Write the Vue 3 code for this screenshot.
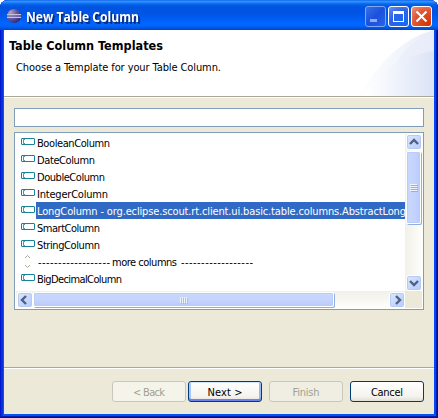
<script setup>
const rows = [
  { label: 'BooleanColumn', width: 73 },
  { label: 'DateColumn', width: 58 },
  { label: 'DoubleColumn', width: 68 },
  { label: 'IntegerColumn', width: 71 },
  { label: 'LongColumn - org.eclipse.scout.rt.client.ui.basic.table.columns.AbstractLong', width: 369, selected: true },
  { label: 'SmartColumn', width: 63 },
  { label: 'StringColumn', width: 63 },
  { label: '------------------ more columns ------------------', separator: true },
  { label: 'BigDecimalColumn', width: 85 },
]
const buttons = [
  { label: '< Back', width: 32, kind: 'disabled' },
  { label: 'Next >', width: 35, kind: 'primary' },
  { label: 'Finish', width: 27, kind: 'disabled finish' },
  { label: 'Cancel', width: 32, kind: 'cancel' },
]
</script>

<template>
  <main class="window">
    <header class="titlebar">
      <svg class="logo" width="16" height="16" viewBox="0 0 16 16">
        <defs>
          <radialGradient id="orb" cx="25%" cy="25%" r="85%">
            <stop offset="0" stop-color="#b9a0bd" />
            <stop offset=".5" stop-color="#665ba0" />
            <stop offset="1" stop-color="#292878" />
          </radialGradient>
        </defs>
        <circle cx="8" cy="8" r="7" fill="url(#orb)" />
        <path d="M1 6.5h14M1 9.5h14" stroke="#c3c2e2" />
        <path d="M1 8h14" stroke="#8d85bc" />
      </svg>
      <div class="caption"><svg width="130" height="28"><text x="0" y="20" textLength="113" lengthAdjust="spacingAndGlyphs">New Table Column</text></svg></div>
      <div class="controls">
        <span class="control min"><svg width="19" height="19"><path d="M4 12h7v3H4z" fill="#91aaf0" /></svg></span>
        <span class="control max"><svg width="19" height="19"><path d="M4 4h11v11H4zM5 7v7h9V7z" fill="#fff" fill-rule="evenodd" /></svg></span>
        <span class="control close"><svg width="19" height="19"><path d="M4.5 4.5l10 10M14.5 4.5l-10 10" stroke="#fff" stroke-width="2.1" /></svg></span>
      </div>
    </header>
    <section class="banner">
      <svg class="swoosh" width="146" height="66">
        <defs>
          <linearGradient id="fade" gradientUnits="userSpaceOnUse" x1="70" x2="146"><stop offset="0" stop-color="#fff" /><stop offset="1" stop-color="#e6ecf9" /></linearGradient>
          <linearGradient id="fade2" gradientUnits="userSpaceOnUse" x1="78" x2="146"><stop offset="0" stop-color="#fff" /><stop offset="1" stop-color="#dbe3f6" /></linearGradient>
        </defs>
        <path d="M72 66Q101 12 146 0V66z" fill="url(#fade)" />
        <path d="M74 66Q101 27 146 21V66z" fill="url(#fade2)" />
        <path d="M108 34Q123 9 146 1V21Q125 23 108 34z" fill="#e8edf9" opacity=".65" />
      </svg>
      <svg class="heading" width="180" height="20"><text x="0" y="13" textLength="154" lengthAdjust="spacingAndGlyphs">Table Column Templates</text></svg>
      <svg class="subtitle" width="240" height="18"><text x="0" y="12" textLength="205">Choose a Template for your Table Column.</text></svg>
    </section>
    <section class="content">
      <div class="filter"></div>
      <div class="list">
        <div class="rows">
          <div v-for="r in rows" :key="r.label" class="row" :class="{ selected: r.selected }">
            <svg class="icon" width="15" height="17">
              <g v-if="r.separator" fill="none" stroke="#aaa69a"><path d="M4 5l2.5-2.5L9 5M4 12l2.5 2.5L9 12" /></g>
              <g v-else fill="#fff" stroke="#168398"><rect x=".5" y="4.5" width="13" height="6" rx=".5" /><path d="M4 5.5H2.5v4H4" fill="none" stroke-width=".8" /></g>
            </svg>
            <svg class="label" width="369" height="17">
              <template v-if="r.separator"><text x="2" y="13" textLength="72">------------------</text><text x="76" y="13" textLength="65">more columns</text><text x="145" y="13" textLength="72">------------------</text></template>
              <text v-else x="1" y="13" :textLength="r.width">{{ r.label }}</text>
            </svg>
          </div>
        </div>
        <div class="vbar">
          <span class="knob"><svg width="14" height="14"><path d="M3 9l4-4 4 4" /></svg></span>
          <span class="thumb vthumb"><i v-for="n in 4" :key="n"></i></span>
          <span class="knob down"><svg width="14" height="14"><path d="M3 5l4 4 4-4" /></svg></span>
        </div>
        <div class="hbar">
          <span class="knob"><svg width="14" height="14"><path d="M8 3L4 7l4 4" /></svg></span>
          <span class="thumb hthumb"><i v-for="n in 4" :key="n"></i></span>
          <span class="knob right"><svg width="14" height="14"><path d="M6 3l4 4-4 4" /></svg></span>
        </div>
        <div class="corner"></div>
      </div>
    </section>
    <footer class="actions">
      <button v-for="b in buttons" :key="b.label" class="button" :class="b.kind">
        <svg width="72" height="19"><text :x="(72 - b.width) / 2" y="14" :textLength="b.width">{{ b.label }}</text></svg>
      </button>
    </footer>
  </main>
</template>

<style>
body { background: #fff; }
</style>
<style scoped>
* { box-sizing: border-box; }
svg { display: block; flex: none; }
.window {
  width: 438px; height: 418px; overflow: hidden; display: flex; flex-direction: column;
  padding: 0 4px 4px; border-radius: 8px 8px 0 0; background: #0831d9;
  box-shadow: inset 1px 0 #0019cf, inset -1px -1px #001199, inset -2px -2px #001db0, inset 3px 0 #0831d9, inset 4px -4px #0855ed, inset -4px 0 #0048f1;
  font-family: "DejaVu Sans Condensed", "DejaVu Sans", sans-serif; font-size: 11px;
}
.titlebar {
  height: 30px; flex: none; display: flex; align-items: flex-start; margin: 0 -4px; padding: 0 6px 0 6px;
  background: linear-gradient(#0058e5 0, #3a93ff 1px, #288eff 2px, #0765e9 4px, #0054e0 7px, #0055e5 14px, #005df5 19px, #0066ff 23px, #0064fc 26px, #0045cb 30px);
}
.logo { margin-top: 8px; }
.caption { margin: 2px 0 0 4px; font: 700 14px "Open Sans", "Noto Sans", sans-serif; }
.caption text { fill: #fff; text-shadow: 1px 1px #06328e; }
.caption svg { filter: drop-shadow(1px 1px 0 #06328e); }
.controls { display: flex; gap: 2px; margin: 6px 0 0 auto; }
.control { width: 21px; height: 21px; border: 1px solid #fff; border-radius: 3px; background: radial-gradient(circle at 80% 90%, #126bf4, #2f62e7 60%, #6d94f3); }
.control.min { border-color: #83a6f3; background: linear-gradient(135deg, #3b70e6, #1b50dd 50%, #2864e5); }
.control.close { background: radial-gradient(circle at 85% 90%, #d83300, #df512d 55%, #ed947d); }
.banner { height: 68px; flex: none; position: relative; background: #fff; border-bottom: 1px solid #fff; box-shadow: inset 0 -1px #aca899; padding: 7px 0 0 5px; }
.swoosh { position: absolute; right: 0; top: 0; }
.heading { position: relative; font: bold 13px "DejaVu Sans Condensed", sans-serif; }
.subtitle { position: relative; margin: 2px 0 0 7px; }
.content { height: 269px; flex: none; background: #ece9d8; padding: 10px 10px 0; }
.filter { height: 19px; border: 1px solid #7f9db9; background: #fff; margin-bottom: 5px; }
.list { height: 178px; border: 1px solid #7f9db9; background: #fff; padding: 1px; display: grid; grid-template: 157px 17px / 389px 17px; }
.rows { overflow: hidden; }
.row { height: 17px; display: flex; padding-left: 5px; }
.selected .label { background: #316ac5; fill: #fff; }
.vbar, .hbar { display: flex; background: linear-gradient(90deg, #f1f0e9, #fefefb); }
.vbar { flex-direction: column; padding: 0 1px; }
.hbar { padding: 1px 0 0 1px; background: linear-gradient(#f1f0e9, #fefefb); }
.corner { background: #ece9d8; }
.knob { flex: none; width: 16px; height: 16px; border: 1px solid #fff; border-radius: 3px; box-shadow: inset 0 0 0 1px #b5c9f5; background: linear-gradient(135deg, #dce6ff, #b5cbfb); }
.knob path { fill: none; stroke: #4d6185; stroke-width: 2.4; }
.down { margin-top: auto; }
.right { margin-left: auto; }
.thumb { flex: none; display: flex; align-items: center; justify-content: center; gap: 1px; border: 1px solid #fff; border-radius: 2px; box-shadow: inset 0 0 0 1px #b9cdfb, 1px 1px #91aee0; }
.vthumb { width: 15px; height: 73px; flex-direction: column; margin-top: 1px; background: linear-gradient(90deg, #c9d8fc, #c3d3fd 60%, #b7cbfb); }
.hthumb { width: 301px; height: 15px; margin-left: 0; background: linear-gradient(#c9d8fc, #c3d3fd 60%, #b7cbfb); }
.vthumb i { width: 7px; height: 1px; background: #eef4fe; box-shadow: 1px 1px #8cb0f8; }
.hthumb i { width: 1px; height: 6px; background: #eef4fe; box-shadow: 1px 1px #a5c0f8; }
.actions { height: 47px; flex: none; display: flex; padding: 12px 10px 0 108px; background: #ece9d8; border-top: 1px solid #aca899; box-shadow: inset 0 1px #fff; }
.button { width: 74px; height: 21px; border: 1px solid #003c74; border-radius: 3px; padding: 0; margin: 1px 2px 0 0; font: inherit; background: linear-gradient(#fff, #f4f3ee 75%, #e3dfd5); }
.primary { margin-right: 7px; box-shadow: inset 0 1px #cee7ff, inset 0 -2px #6982ee, inset 2px 0 #aac5f5, inset -2px 0 #9ab8ef; }
.disabled { background: #f5f4ea; border-color: #c9c7ba; fill: #a1a192; }
.finish { background: #f0eee2; margin-right: 7px; }
.cancel { margin-right: 0; }
</style>
